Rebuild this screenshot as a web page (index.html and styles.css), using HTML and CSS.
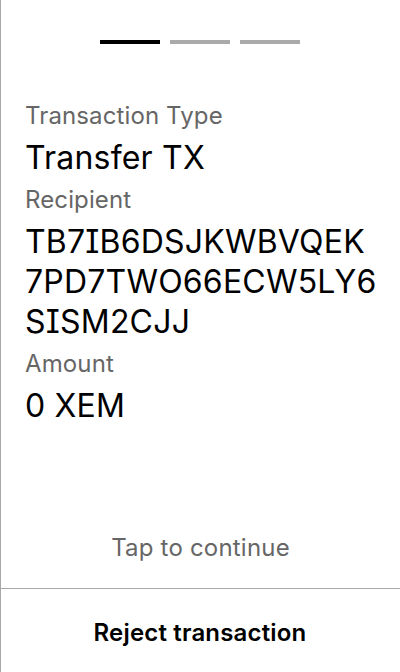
FILE: index.html
```html
<!DOCTYPE html>
<html lang="en">
<head>
<meta charset="utf-8">
<link rel="stylesheet" href="styles.css">
</head>
<body>
<div class="screen">
  <div class="progress">
    <span class="bar active"></span>
    <span class="bar"></span>
    <span class="bar"></span>
  </div>
  <div class="details">
    <div class="label">Transaction Type</div>
    <div class="value">Transfer TX</div>
    <div class="label">Recipient</div>
    <div class="value address">TB7IB6DSJKWBVQEK<br>7PD7TWO66ECW5LY6<br>SISM2CJJ</div>
    <div class="label">Amount</div>
    <div class="value">0 XEM</div>
  </div>
  <div class="tap">Tap to continue</div>
  <div class="reject">Reject transaction</div>
</div>
</body>
</html>
```
FILE: styles.css
```css
html, body {
  margin: 0;
  padding: 0;
  background: #fff;
}
body {
  font-family: Inter, "Noto Sans", sans-serif;
  color: #000;
}
.screen {
  box-sizing: border-box;
  height: 672px;
  border-left: 1px solid #a8a8a8;
  display: flex;
  flex-direction: column;
}
.progress {
  display: flex;
  justify-content: center;
  gap: 10px;
  padding-top: 40px;
  margin-left: -1px;
}
.bar {
  width: 60px;
  height: 4px;
  background: #aaaaaa;
}
.bar.active {
  background: #000;
}
.details {
  padding: 50px 0 0 24px;
}
.label {
  font-size: 24px;
  line-height: 44px;
  letter-spacing: 0.12px;
  color: #666;
}
.value {
  font-size: 32px;
  line-height: 40px;
  letter-spacing: 0.2px;
}
.address {
  font-feature-settings: "cv08";
}
.tap {
  margin-top: auto;
  text-align: center;
  font-size: 24px;
  line-height: 40px;
  letter-spacing: 0.2px;
  color: #666;
  padding-bottom: 20px;
}
.reject {
  border-top: 1px solid #a8a8a8;
  margin-left: -1px;
  height: 84px;
  display: flex;
  align-items: center;
  justify-content: center;
  padding-top: 3px;
  box-sizing: border-box;
  font-size: 24px;
  font-weight: 600;
  letter-spacing: 0.17px;
}
```
